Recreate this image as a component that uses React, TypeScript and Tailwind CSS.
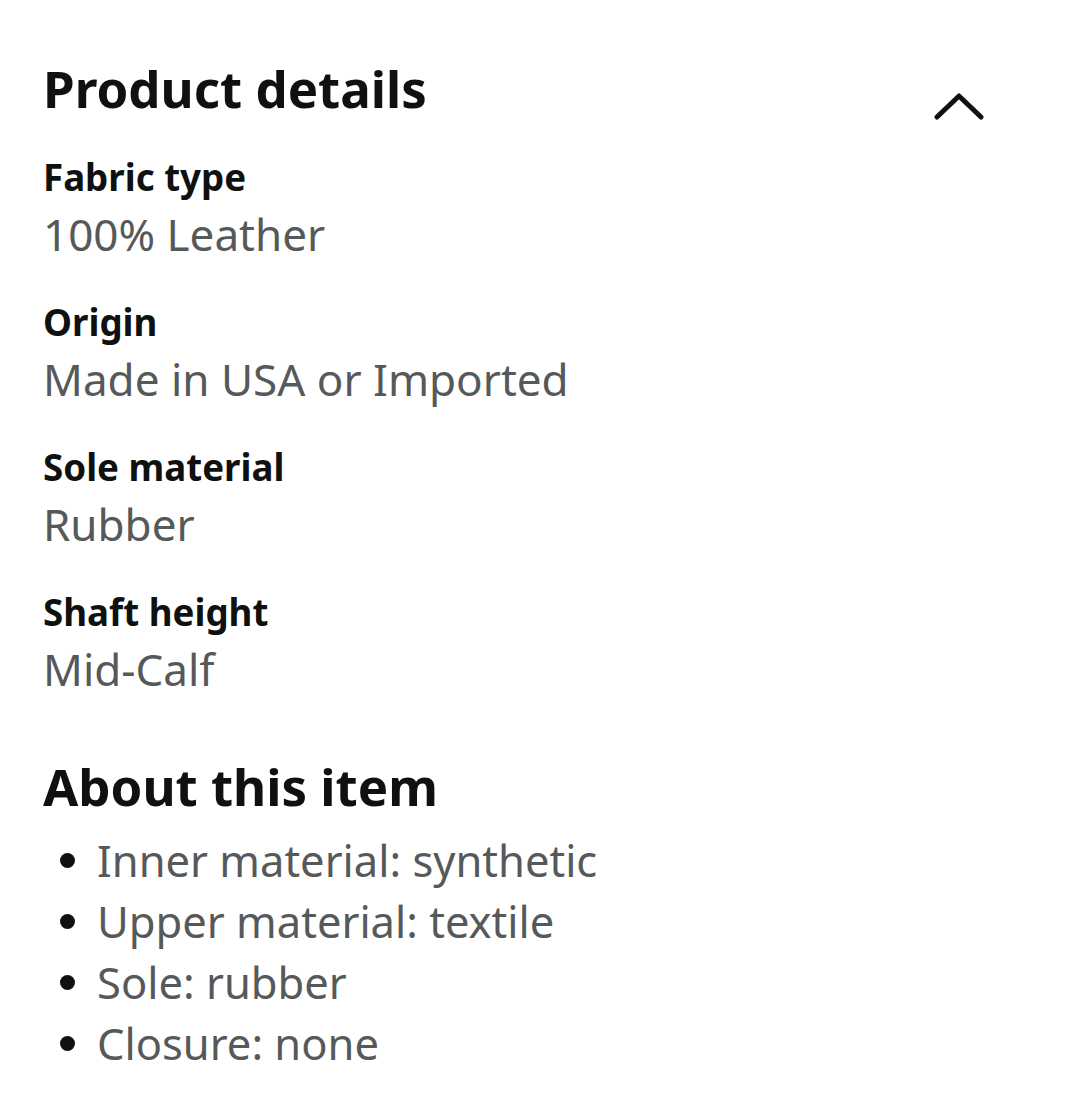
import React from "react";

const details = [
  { label: "Fabric type", value: "100% Leather" },
  { label: "Origin", value: "Made in USA or Imported" },
  { label: "Sole material", value: "Rubber" },
  { label: "Shaft height", value: "Mid-Calf" },
];

const bullets = [
  "Inner material: synthetic",
  "Upper material: textile",
  "Sole: rubber",
  "Closure: none",
];

export default function App() {
  return (
    <div
      className="w-[1078px] h-[1106px] bg-white text-[#0f1111] pl-[43px] pr-[94px] pt-[56px]"
      style={{ fontFamily: '"Noto Sans", "Open Sans", sans-serif' }}
    >
      <div className="flex items-start justify-between">
        <h2 className="text-[51px] leading-[64px] font-bold">Product details</h2>
        <svg width="50" height="30" viewBox="0 0 50 30" className="mt-[36px]">
          <path d="M3 25 L25 4 L47 25" fill="none" stroke="#0f1111" strokeWidth="5" strokeLinecap="round" strokeLinejoin="round" />
        </svg>
      </div>
      <div className="flex flex-col gap-[30px] mt-[26px]">
        {details.map((d) => (
          <div key={d.label} className="flex flex-col">
            <div className="text-[36.7px] leading-[58px] font-bold">{d.label}</div>
            <div className="text-[44px] leading-[57px] text-[#565959]">{d.value}</div>
          </div>
        ))}
      </div>
      <h2 className="text-[51px] leading-[64px] font-bold mt-[56px]">About this item</h2>
      <ul className="mt-[12px] pl-[17px]">
        {bullets.map((b) => (
          <li key={b} className="flex items-center text-[43.5px] leading-[61px] text-[#565959]">
            <span className="w-[15px] h-[15px] rounded-full bg-[#0f1111] mr-[22px] shrink-0" />
            {b}
          </li>
        ))}
      </ul>
    </div>
  );
}
